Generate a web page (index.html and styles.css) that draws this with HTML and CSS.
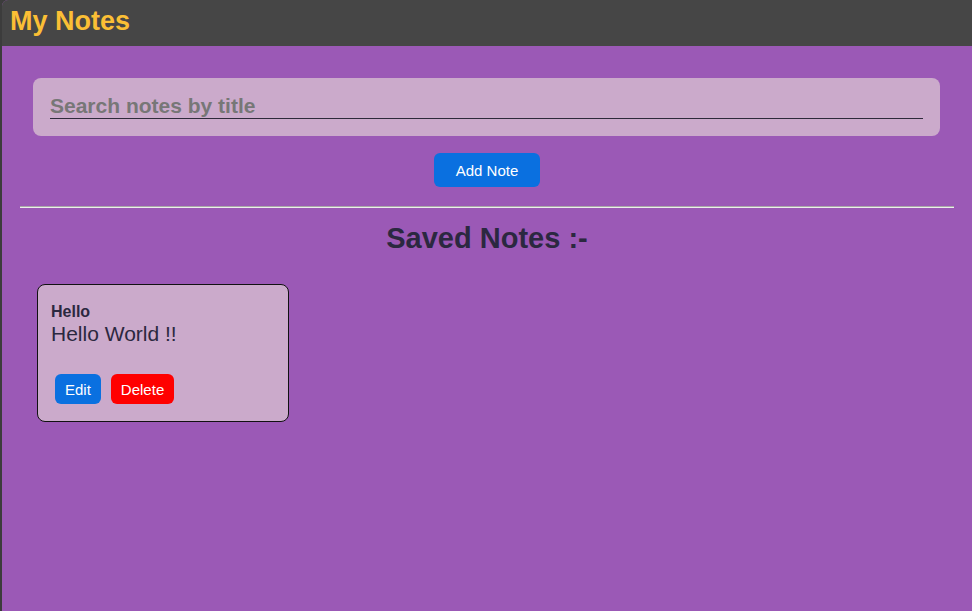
FILE: index.html
```html
<!DOCTYPE html>
<html>
<head>
<meta charset="utf-8">
<title>My Notes</title>
<link rel="stylesheet" href="styles.css">
</head>
<body>
<div class="app">
  <header class="topbar">
    <h1 class="brand">My Notes</h1>
  </header>
  <main class="main">
    <div class="search-box">
      <input class="search-input" type="text" placeholder="Search notes by title">
    </div>
    <div class="add-row">
      <button class="btn btn-blue btn-add">Add Note</button>
    </div>
    <hr class="divider">
    <h2 class="section-title">Saved Notes :-</h2>
    <div class="notes">
      <div class="note-card">
        <div class="note-title">Hello</div>
        <div class="note-body">Hello World !!</div>
        <div class="note-actions">
          <button class="btn btn-blue btn-small">Edit</button>
          <button class="btn btn-red btn-small">Delete</button>
        </div>
      </div>
    </div>
  </main>
</div>
</body>
</html>
```

FILE: styles.css
```css
html, body {
  margin: 0;
  padding: 0;
  height: 100%;
}
body {
  background: #3c3c3c;
  font-family: "Liberation Sans", Arial, sans-serif;
}
.app {
  margin-left: 2px;
  min-height: 100%;
  background: #9b59b6;
  border-top-left-radius: 6px;
  overflow: hidden;
}
.topbar {
  background: #464646;
  height: 46px;
  padding-left: 8px;
  display: flex;
  align-items: center;
}
.brand {
  margin: 0;
  font-size: 27px;
  font-weight: bold;
  color: #fbbf35;
  line-height: 1;
  padding-bottom: 4px;
}
.main {
  padding: 32px 18px 0;
}
.search-box {
  margin: 0 14px 0 13px;
  background: #cbaacb;
  border-radius: 8px;
  padding: 16px 17px 17px 17px;
}
.search-input {
  display: block;
  width: 100%;
  box-sizing: border-box;
  border: none;
  border-bottom: 1px solid #2e2a3a;
  background: transparent;
  font-family: "Liberation Sans", Arial, sans-serif;
  font-size: 21px;
  font-weight: bold;
  height: 25px;
  padding: 0;
  outline: none;
  color: #333;
}
.search-input::placeholder {
  color: #777777;
  opacity: 1;
}
.add-row {
  display: flex;
  justify-content: center;
  margin-top: 17px;
}
.btn {
  border: none;
  color: #fff;
  font-family: "Liberation Sans", Arial, sans-serif;
  font-size: 15px;
  border-radius: 6px;
  cursor: pointer;
}
.btn-blue {
  background: #0a70e0;
}
.btn-red {
  background: #ff0000;
}
.btn-add {
  height: 34px;
  width: 106px;
  padding: 0;
}
.divider {
  margin: 19px 0 0;
  border: none;
  border-top: 1px solid #a9a9a9;
  border-bottom: 1px solid #eeeeee;
  height: 0;
}
.section-title {
  margin: 13px 0 0;
  text-align: center;
  font-size: 29px;
  font-weight: bold;
  color: #2b2840;
  line-height: 34px;
}
.notes {
  display: flex;
  padding: 29px 0 0 17px;
}
.note-card {
  width: 224px;
  background: #cbaacb;
  border: 1px solid #111;
  border-radius: 8px;
  padding: 17px 13px 17px 13px;
  color: #2b2840;
}
.note-title {
  font-weight: bold;
  font-size: 16px;
  line-height: 19px;
}
.note-body {
  font-size: 21px;
  line-height: 25px;
  margin-top: 0;
}
.note-actions {
  display: flex;
  gap: 10px;
  margin-top: 28px;
  padding-left: 4px;
}
.btn-small {
  height: 30px;
  padding: 0 10px;
}
```
